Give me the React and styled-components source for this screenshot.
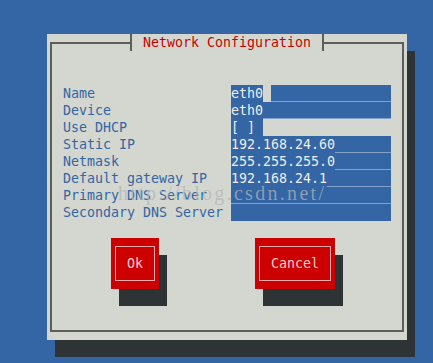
import { Fragment } from "react";
import styled, { createGlobalStyle } from "styled-components";

const GlobalStyle = createGlobalStyle`
  * {
    box-sizing: border-box;
  }
  body {
    margin: 0;
    background: #3465a4;
    font-family: "DejaVu Sans Mono", "Liberation Mono", monospace;
    font-size: 13.29px;
    line-height: 17px;
  }
`;

const Screen = styled.div`
  position: relative;
  width: 433px;
  height: 363px;
  overflow: hidden;
  padding: 34px 0 0 47px;
`;

const Dialog = styled.div`
  width: 360px;
  height: 306px;
  padding: 8px 3px;
  background: #d3d7cf;
  box-shadow: 8px 17px 0 #2e3436;
`;

const Frame = styled.div`
  height: 100%;
  border: 2px solid #5c5e5a;
  display: flex;
  flex-direction: column;
`;

const TitleBar = styled.div`
  display: flex;
  justify-content: center;
  margin-top: -10px;
`;

const Title = styled.div`
  height: 17px;
  padding: 0 11px;
  background: #d3d7cf;
  border-left: 2px solid #5c5e5a;
  border-right: 2px solid #5c5e5a;
  color: #cc0000;
  white-space: pre;
`;

const Form = styled.div`
  display: grid;
  grid-template-columns: 168px 160px;
  grid-auto-rows: 17px;
  margin: 34px 0 0 11px;
`;

const Label = styled.div`
  color: #3465a4;
  white-space: pre;
`;

const Field = styled.div`
  display: flex;
  width: ${(p) => (p.$short ? "32px" : "160px")};
  background: #3465a4;
  color: #eeeeec;
  white-space: pre;
`;

const Value = styled.span`
  background: #3465a4;
`;

const Cursor = styled.span`
  width: 8px;
  background: #d3d7cf;
`;

const Rest = styled.span`
  flex: 1;
  box-shadow: ${(p) => (p.$last ? "none" : "inset 0 -1px 0 #86a1c9")};
`;

const ButtonRow = styled.div`
  display: flex;
  gap: 96px;
  margin: 17px 0 0 59px;
`;

const Button = styled.div`
  width: ${(p) => p.$cols * 8}px;
  height: 51px;
  padding: 8px 4px;
  background: #cc0000;
  box-shadow: 8px 17px 0 #2e3436;
`;

const ButtonFace = styled.div`
  height: 100%;
  border: 1px solid #f0aaaa;
  display: flex;
  align-items: center;
  justify-content: center;
  color: #f6cccc;
`;

// csdn watermark baked into the screenshot, sits over the form
const Watermark = styled.div`
  position: absolute;
  left: 118px;
  top: 183px;
  font-family: "Liberation Serif", serif;
  font-size: 20px;
  line-height: 20px;
  letter-spacing: 2.3px;
  color: rgba(178, 180, 184, 0.72);
  pointer-events: none;
`;

const fields = [
  { label: "Name", value: "eth0", cursor: true },
  { label: "Device", value: "eth0" },
  { label: "Use DHCP", value: "[ ] ", short: true },
  { label: "Static IP", value: "192.168.24.60" },
  { label: "Netmask", value: "255.255.255.0" },
  { label: "Default gateway IP", value: "192.168.24.1" },
  { label: "Primary DNS Server", value: "" },
  { label: "Secondary DNS Server", value: "", last: true },
];

export default function App() {
  return (
    <>
      <GlobalStyle />
      <Screen>
        <Dialog>
          <Frame>
            <TitleBar>
              <Title>Network Configuration</Title>
            </TitleBar>
            <Form>
              {fields.map((f) => (
                <Fragment key={f.label}>
                  <Label>{f.label}</Label>
                  <Field $short={f.short}>
                    {f.value && <Value>{f.value}</Value>}
                    {f.cursor && <Cursor />}
                    {!f.short && <Rest $last={f.last} />}
                  </Field>
                </Fragment>
              ))}
            </Form>
            <ButtonRow>
              <Button $cols={6}>
                <ButtonFace>Ok</ButtonFace>
              </Button>
              <Button $cols={10}>
                <ButtonFace>Cancel</ButtonFace>
              </Button>
            </ButtonRow>
          </Frame>
        </Dialog>
        <Watermark>http://blog.csdn.net/</Watermark>
      </Screen>
    </>
  );
}
